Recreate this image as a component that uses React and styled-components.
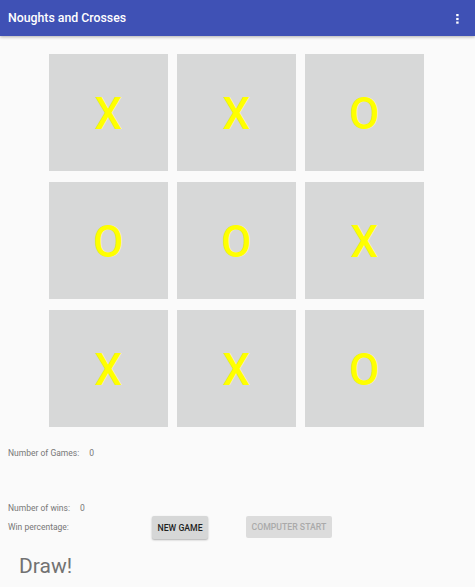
import styled, { createGlobalStyle } from "styled-components";

const GlobalStyle = createGlobalStyle`
  html, body {
    margin: 0;
    padding: 0;
    background: #fafafa;
    font-family: Roboto, "Liberation Sans", sans-serif;
  }
`;

const Page = styled.div`
  min-height: 587px;
  background: #fafafa;
  display: flex;
  flex-direction: column;
`;

const AppBar = styled.header`
  height: 36px;
  background: #3f51b5;
  display: flex;
  align-items: center;
  justify-content: space-between;
  padding: 0 8px;
  box-shadow: 0 1px 3px rgba(0, 0, 0, 0.3);
  position: relative;
  z-index: 1;
`;

const Title = styled.h1`
  margin: 0;
  color: #fff;
  font-size: 12.3px;
  font-weight: 500;
`;

const MenuButton = styled.div`
  width: 20px;
  display: flex;
  justify-content: flex-end;
  padding-right: 8px;
`;

const Board = styled.div`
  display: grid;
  grid-template-columns: repeat(3, 119px);
  grid-template-rows: repeat(3, 117px);
  column-gap: 9px;
  row-gap: 11px;
  justify-content: center;
  padding-right: 2px;
  margin-top: 18px;
`;

const Cell = styled.div`
  background: #d7d8d8;
  display: flex;
  align-items: center;
  justify-content: center;
  color: #ffff00;
  font-size: 44px;
  font-weight: 500;
  line-height: 1;
  padding-top: 3px;
  box-sizing: border-box;
`;

const Stats = styled.section`
  padding-left: 8px;
  margin-top: 16px;
`;

const StatLine = styled.div`
  display: flex;
  height: 19px;
  align-items: center;
  font-size: 8.5px;
  color: #777;
`;

const StatValue = styled.span`
  margin-left: ${(p) => p.gap}px;
`;

const Footer = styled.div`
  display: flex;
  align-items: flex-start;
  margin-top: 36px;
`;

const LeftCol = styled.div`
  width: 144px;
`;

const Button = styled.button`
  margin-top: 18px;
  margin-left: ${(p) => p.offset || 0}px;
  height: ${(p) => (p.disabled ? 22 : 23)}px;
  padding: 0 5.5px;
  border: none;
  border-radius: 2px;
  background: ${(p) => (p.disabled ? "#dcdcdc" : "#d6d7d7")};
  color: ${(p) => (p.disabled ? "#aaaaaa" : "#1f1f1f")};
  font-family: Roboto, "Liberation Sans", sans-serif;
  font-size: 8.7px;
  font-weight: 500;
  box-shadow: ${(p) => (p.disabled ? "none" : "0 1px 2px rgba(0,0,0,0.3)")};
`;

const Result = styled.div`
  margin-top: 15px;
  padding-left: 19px;
  font-size: 21px;
  line-height: 24px;
  color: #727272;
`;

const cells = ["X", "X", "O", "O", "O", "X", "X", "X", "O"];

const App = () => {
  return (
    <Page>
      <GlobalStyle />
      <AppBar>
        <Title>Noughts and Crosses</Title>
        <MenuButton>
          <svg width="3" height="11" viewBox="0 0 3 11">
            <rect x="0.2" y="1" width="2.4" height="2.2" fill="#fff" />
            <rect x="0.2" y="4.9" width="2.4" height="2.2" fill="#fff" />
            <rect x="0.2" y="8.5" width="2.4" height="2.2" fill="#fff" />
          </svg>
        </MenuButton>
      </AppBar>
      <Board>
        {cells.map((c, i) => (
          <Cell key={i}>{c}</Cell>
        ))}
      </Board>
      <Stats>
        <StatLine>
          Number of Games:<StatValue gap={10}>0</StatValue>
        </StatLine>
        <Footer>
          <LeftCol>
            <StatLine>
              Number of wins:<StatValue gap={10}>0</StatValue>
            </StatLine>
            <StatLine>Win percentage:</StatLine>
          </LeftCol>
          <Button>NEW GAME</Button>
          <Button disabled offset={38}>COMPUTER START</Button>
        </Footer>
      </Stats>
      <Result>Draw!</Result>
    </Page>
  );
};

export default App;
